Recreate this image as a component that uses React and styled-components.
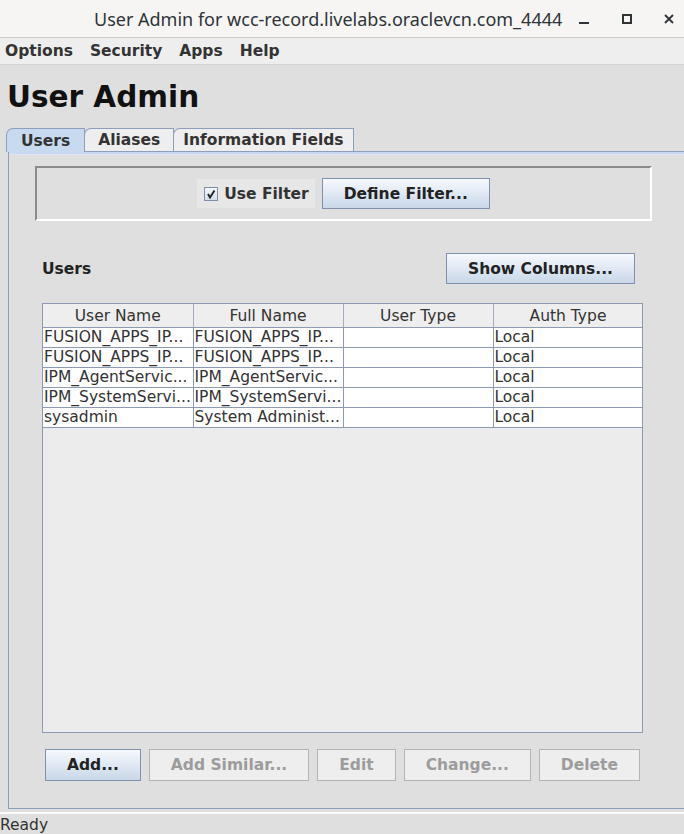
import React from "react";
import styled, { createGlobalStyle, css } from "styled-components";

const GlobalStyle = createGlobalStyle`
  html, body { margin: 0; padding: 0; }
  body {
    background: #dfdfdf;
    font-family: "DejaVu Sans", "Liberation Sans", sans-serif;
    overflow: hidden;
  }
`;

const Window = styled.div`
  width: 684px;
  height: 834px;
  display: flex;
  flex-direction: column;
  background: #dfdfdf;
  overflow: hidden;
`;

const TitleBar = styled.div`
  height: 38px;
  flex: none;
  display: flex;
  align-items: center;
  padding-left: 94px;
  background: #f6f5f4;
  border-bottom: 1px solid #cdcbc8;
  box-sizing: border-box;
`;

const TitleText = styled.div`
  font-family: "Noto Sans", "Open Sans", sans-serif;
  font-size: 18px;
  color: #2e3436;
  white-space: nowrap;
  flex: 1;
  padding-top: 1px;
`;

const WinButtons = styled.div`
  display: flex;
  align-items: center;
  padding-right: 10px;
`;

const WinButton = styled.div`
  width: ${(p) => p.$w}px;
  display: flex;
  justify-content: flex-start;
  align-items: center;
`;

const MenuBar = styled.div`
  height: 27px;
  flex: none;
  display: flex;
  align-items: center;
  gap: 17px;
  padding-left: 5px;
  background: #eeeeee;
  border-bottom: 1px solid #d2d2d2;
  box-sizing: border-box;
`;

const MenuItem = styled.div`
  font-size: 15.5px;
  font-weight: bold;
  color: #333;
`;

const Heading = styled.h1`
  margin: 14px 0 0 7px;
  font-size: 29.5px;
  line-height: 36px;
  font-weight: bold;
  color: #111;
`;

const TabStrip = styled.div`
  display: flex;
  margin-top: 13px;
  padding-left: 6px;
  height: 23px;
  align-items: flex-end;
`;

const Tab = styled.div`
  height: 23px;
  box-sizing: border-box;
  padding: 0 ${(p) => p.$pad}px;
  display: flex;
  align-items: center;
  font-size: 15.5px;
  font-weight: bold;
  color: #333;
  border: 1px solid #8e9fbd;
  border-bottom: none;
  border-top-left-radius: 7px;
  margin-right: -1px;
  background: #eeeeee;
  ${(p) =>
    p.$selected &&
    css`
      background: #c8daf0;
      position: relative;
      z-index: 1;
      height: 24px;
      margin-bottom: -1px;
    `}
`;

const TabPanel = styled.div`
  margin-left: 8px;
  width: 690px;
  height: 658px;
  flex: none;
  box-sizing: border-box;
  border: 1px solid #8e9fbd;
  border-right: none;
  box-shadow: inset 0 2px 0 #c8daf0, inset 0 3px 0 #dfe6f0;
  display: flex;
  flex-direction: column;
  padding: 14px 0 0 26px;
`;

const FilterBox = styled.div`
  width: 617px;
  height: 55px;
  box-sizing: border-box;
  border-top: 2px solid #8a8a8a;
  border-left: 2px solid #8a8a8a;
  border-bottom: 2px solid #ffffff;
  border-right: 2px solid #ffffff;
  display: flex;
  align-items: center;
  justify-content: center;
  gap: 7px;
`;

const CheckLabel = styled.label`
  display: flex;
  align-items: center;
  gap: 6px;
  height: 29px;
  padding: 0 6px 0 7px;
  background: #e7e7e7;
  font-size: 15.5px;
  font-weight: bold;
  color: #333;
`;

const CheckBox = styled.span`
  width: 14px;
  height: 14px;
  box-sizing: border-box;
  border: 1px solid #7f8fa9;
  background: linear-gradient(#f4f7fb, #d3deec);
  display: flex;
  align-items: center;
  justify-content: center;
`;

const Button = styled.button`
  height: ${(p) => p.$h || 31}px;
  box-sizing: border-box;
  padding: 0 21px;
  font-family: "DejaVu Sans", sans-serif;
  font-size: 15.5px;
  font-weight: bold;
  border-radius: 0;
  cursor: default;
  ${(p) =>
    p.disabled
      ? css`
          color: #9c9c9c;
          background: #eeeeee;
          border: 1px solid #b4b4b4;
        `
      : css`
          color: #222;
          background: linear-gradient(#f6f9fd 0%, #e2eaf4 45%, #c9d7e8 100%);
          border: 1px solid #8091ad;
        `}
`;

const UsersRow = styled.div`
  width: 601px;
  margin-left: 7px;
  margin-top: 32px;
  display: flex;
  align-items: center;
  justify-content: space-between;
  padding-right: 8px;
  box-sizing: border-box;
`;

const SectionLabel = styled.div`
  font-size: 15.5px;
  font-weight: bold;
  color: #222;
`;

const ScrollPane = styled.div`
  width: 601px;
  height: 430px;
  margin-left: 7px;
  margin-top: 19px;
  box-sizing: border-box;
  border: 1px solid #8d9bb2;
  background: #ececec;
  overflow: hidden;
`;

const Table = styled.table`
  border-collapse: collapse;
  table-layout: fixed;
  width: 600px;
  font-size: 15.5px;
  color: #333;
`;

const HeadCell = styled.th`
  height: 23px;
  padding: 0;
  font-weight: normal;
  text-align: center;
  background: #eeeeee;
  border-right: 1px solid #a4adbd;
  border-bottom: 1px solid #8d9bb2;
  white-space: nowrap;
  overflow: hidden;
  &:last-child { border-right: 1px solid #8d9bb2; }
`;

const Cell = styled.td`
  height: 19px;
  padding: 0 0 0 1px;
  background: #ffffff;
  border-right: 1px solid #8d9bb2;
  border-bottom: 1px solid #8d9bb2;
  white-space: nowrap;
  overflow: hidden;
  line-height: 19px;
`;

const ButtonRow = styled.div`
  width: 601px;
  margin-left: 7px;
  margin-top: 16px;
  display: flex;
  justify-content: center;
  gap: 8px;
`;

const StatusBar = styled.div`
  margin-top: 3px;
  border-top: 2px solid #fbfbfb;
  padding: 1px 0 0 0;
  font-size: 15.5px;
  color: #333;
  line-height: 20px;
`;

const rows = [
  ["FUSION_APPS_IP...", "FUSION_APPS_IP...", "", "Local"],
  ["FUSION_APPS_IP...", "FUSION_APPS_IP...", "", "Local"],
  ["IPM_AgentServic...", "IPM_AgentServic...", "", "Local"],
  ["IPM_SystemServi...", "IPM_SystemServi...", "", "Local"],
  ["sysadmin", "System Administ...", "", "Local"],
];

export default function App() {
  return (
    <>
      <GlobalStyle />
      <Window>
        <TitleBar>
          <TitleText>User Admin for wcc-record.livelabs.oraclevcn.com_4444</TitleText>
          <WinButtons>
            <WinButton $w={43}>
              <svg width="11" height="12" viewBox="0 0 11 12">
                <rect x="0" y="9" width="10" height="2" fill="#2e3436" />
              </svg>
            </WinButton>
            <WinButton $w={42}>
              <svg width="10" height="10" viewBox="0 0 10 10">
                <rect x="1" y="1" width="8" height="8" fill="none" stroke="#2e3436" strokeWidth="2" />
              </svg>
            </WinButton>
            <WinButton $w={10}>
              <svg width="10" height="10" viewBox="0 0 10 10">
                <path d="M1 1 L9 9 M9 1 L1 9" stroke="#2e3436" strokeWidth="1.8" />
              </svg>
            </WinButton>
          </WinButtons>
        </TitleBar>
        <MenuBar>
          <MenuItem>Options</MenuItem>
          <MenuItem>Security</MenuItem>
          <MenuItem>Apps</MenuItem>
          <MenuItem>Help</MenuItem>
        </MenuBar>
        <Heading>User Admin</Heading>
        <TabStrip>
          <Tab $selected $pad={14}>Users</Tab>
          <Tab $pad={13}>Aliases</Tab>
          <Tab $pad={9}>Information Fields</Tab>
        </TabStrip>
        <TabPanel>
          <FilterBox>
            <CheckLabel>
              <CheckBox>
                <svg width="10" height="10" viewBox="0 0 10 10">
                  <path d="M2 5 L4 8.5 L8.5 1.5" fill="none" stroke="#222" strokeWidth="1.9" />
                </svg>
              </CheckBox>
              Use Filter
            </CheckLabel>
            <Button>Define Filter...</Button>
          </FilterBox>
          <UsersRow>
            <SectionLabel>Users</SectionLabel>
            <Button>Show Columns...</Button>
          </UsersRow>
          <ScrollPane>
            <Table>
              <colgroup>
                <col style={{ width: 150 }} />
                <col style={{ width: 150 }} />
                <col style={{ width: 150 }} />
                <col style={{ width: 150 }} />
              </colgroup>
              <thead>
                <tr>
                  <HeadCell>User Name</HeadCell>
                  <HeadCell>Full Name</HeadCell>
                  <HeadCell>User Type</HeadCell>
                  <HeadCell>Auth Type</HeadCell>
                </tr>
              </thead>
              <tbody>
                {rows.map((r, i) => (
                  <tr key={i}>
                    {r.map((c, j) => (
                      <Cell key={j}>{c}</Cell>
                    ))}
                  </tr>
                ))}
              </tbody>
            </Table>
          </ScrollPane>
          <ButtonRow>
            <Button $h={32}>Add...</Button>
            <Button $h={32} disabled>Add Similar...</Button>
            <Button $h={32} disabled>Edit</Button>
            <Button $h={32} disabled>Change...</Button>
            <Button $h={32} disabled>Delete</Button>
          </ButtonRow>
        </TabPanel>
        <StatusBar>Ready</StatusBar>
      </Window>
    </>
  );
}
